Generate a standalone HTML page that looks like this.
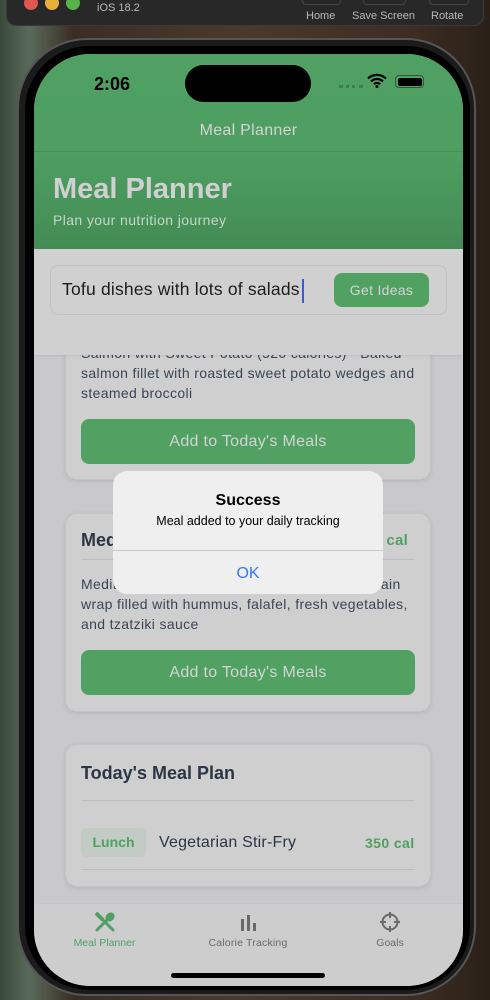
<!DOCTYPE html>
<html><head><meta charset="utf-8"><style>
*{margin:0;padding:0;box-sizing:border-box}
body{width:490px;height:1000px;overflow:hidden;position:relative;font-family:"Liberation Sans",sans-serif;background:linear-gradient(90deg,#3a4a3a 0%,#5a6a5a 6%,#3a2e24 15%,#4a3a2c 50%,#3c2c22 85%,#2a2018 100%)}
.abs{position:absolute}
.mac{left:6px;top:-10px;width:478px;height:36px;background:#282828;border-radius:10px;border:1px solid #3a3a3a}
.dot{width:14px;height:14px;border-radius:50%;top:-4px}
.mt{color:#b8b8b8;font-size:11px}
.frame{left:17px;top:38px;width:459px;height:958px;border-radius:70px;background:#1b1b1b;border:2px solid #555}
.bez{left:25px;top:46px;width:445px;height:944px;border-radius:64px;background:#000}
.screen{left:34px;top:54px;width:429px;height:932px;border-radius:56px;overflow:hidden;background:#c9c9cb}
.hdr{left:0;top:0;width:429px;height:195px;background:linear-gradient(#4fa062 0%,#4e9f61 50%,#438c55 100%)}
.card{background:#cfcfd0;border-radius:12px;box-shadow:0 1px 4px rgba(0,0,0,.12);border:1px solid #c4c4c6}
.btn{background:#51a163;border-radius:8px;color:#d3d3d3;font-size:16px;text-align:center;letter-spacing:.3px}
.txt{color:#3a4556;font-size:14px;line-height:20px;letter-spacing:.35px}
</style></head><body>
<div class="abs mac"></div>
<div class="abs dot" style="left:24px;background:#e0574f"></div>
<div class="abs dot" style="left:45px;background:#e7b03b"></div>
<div class="abs dot" style="left:66px;background:#56b347"></div>
<div class="abs mt" style="left:97px;top:2px">iOS 18.2</div>
<div class="abs mt" style="left:306px;top:10px">Home</div>
<div class="abs mt" style="left:352px;top:10px">Save Screen</div>
<div class="abs mt" style="left:431px;top:10px">Rotate</div>
<div class="abs" style="left:302px;top:-6px;width:39px;height:11px;border:1px solid #444;border-radius:4px"></div>
<div class="abs" style="left:363px;top:-6px;width:43px;height:11px;border:1px solid #444;border-radius:4px"></div>
<div class="abs" style="left:429px;top:-6px;width:40px;height:11px;border:1px solid #444;border-radius:4px"></div>
<div class="abs frame"></div>
<div class="abs bez"></div>
<div class="abs screen">
 <div class="abs hdr"></div>
 <div class="abs" style="left:60px;top:20px;font-size:18px;font-weight:bold;color:#000">2:06</div>
 <div class="abs" style="left:151px;top:11px;width:126px;height:37px;border-radius:19px;background:#000"></div>
 <div class="abs" style="left:305px;top:31px;width:24px;height:3px;border-top:3px dotted #3f7d4e"></div>
 <svg class="abs" style="left:333px;top:19px" width="20" height="15" viewBox="0 0 20 15"><path d="M1 5.5a13 13 0 0 1 18 0M4 8.5a8.5 8.5 0 0 1 12 0M7 11.3a4 4 0 0 1 6 0" stroke="#000" stroke-width="2.2" fill="none"/><circle cx="10" cy="13.5" r="1.5"/></svg>
 <div class="abs" style="left:361px;top:21px;width:29px;height:13px;border:1px solid #2d5a37;border-radius:4px;padding:1.5px"><div style="width:100%;height:100%;background:#000;border-radius:2px"></div></div>
 <div class="abs" style="left:0;top:68px;width:429px;text-align:center;color:#d4d4d4;font-size:16px;letter-spacing:.3px">Meal Planner</div>
 <div class="abs" style="left:0;top:97px;width:429px;height:1px;background:#46915a"></div>
 <div class="abs" style="left:19px;top:119px;color:#d0d0d0;font-size:29px;font-weight:bold">Meal Planner</div>
 <div class="abs" style="left:19px;top:158px;color:#c8d4ca;font-size:14px;letter-spacing:.4px">Plan your nutrition journey</div>
 <!-- card1 -->
 <div class="abs card" style="left:31px;top:260px;width:366px;height:166px"></div>
 <div class="abs txt" style="left:47px;top:289px;width:345px">Salmon with Sweet Potato (520 calories) - Baked salmon fillet with roasted sweet potato wedges and steamed broccoli</div>
 <div class="abs" style="left:0;top:195px;width:429px;height:106px;background:#d0d0d1;box-shadow:0 1px 2px rgba(0,0,0,.08)"></div>
 <div class="abs" style="left:16px;top:211px;width:397px;height:50px;border:1px solid #c2c2c4;border-radius:8px"></div>
 <div class="abs" style="left:28px;top:225px;font-size:17.5px;color:#1c1c1c;letter-spacing:.2px">Tofu dishes with lots of salads</div>
 <div class="abs" style="left:268px;top:225px;width:2px;height:24px;background:#3b5bd6"></div>
 <div class="abs btn" style="left:300px;top:219px;width:95px;height:34px;line-height:34px;font-size:14px">Get Ideas</div>
 <div class="abs btn" style="left:47px;top:365px;width:334px;height:45px;line-height:45px">Add to Today's Meals</div>
 <!-- card2 -->
 <div class="abs card" style="left:31px;top:459px;width:366px;height:199px"></div>
 <div class="abs" style="left:47px;top:476px;font-size:18px;font-weight:bold;color:#2b3546">Mediterranean Wrap</div>
 <div class="abs" style="left:322px;top:478px;font-size:15px;font-weight:bold;color:#4fa062;letter-spacing:.3px">450 cal</div>
 <div class="abs" style="left:47px;top:505px;width:334px;height:1px;background:#bdbdbf"></div>
 <div class="abs txt" style="left:47px;top:520px;width:345px">Mediterranean Wrap (450 calories) - Whole grain wrap filled with hummus, falafel, fresh vegetables, and tzatziki sauce</div>
 <div class="abs btn" style="left:47px;top:596px;width:334px;height:45px;line-height:45px">Add to Today's Meals</div>
 <!-- card3 -->
 <div class="abs card" style="left:31px;top:690px;width:366px;height:143px"></div>
 <div class="abs" style="left:47px;top:709px;font-size:18px;font-weight:bold;color:#2b3546">Today's Meal Plan</div>
 <div class="abs" style="left:47px;top:746px;width:334px;height:1px;background:#bdbdbf"></div>
 <div class="abs" style="left:47px;top:774px;width:65px;height:29px;background:#c2ccc5;border-radius:5px;color:#4fa062;font-size:14px;font-weight:bold;text-align:center;line-height:29px">Lunch</div>
 <div class="abs" style="left:125px;top:780px;font-size:16px;color:#2b3546;letter-spacing:.2px">Vegetarian Stir-Fry</div>
 <div class="abs" style="left:331px;top:781px;font-size:14px;font-weight:bold;color:#4fa062;letter-spacing:.4px">350 cal</div>
 <div class="abs" style="left:47px;top:815px;width:334px;height:1px;background:#bdbdbf"></div>
 <!-- tabbar -->
 <div class="abs" style="left:0;top:849px;width:429px;height:90px;background:#cdcdce;border-top:1px solid #c4c4c6"></div>
 <svg class="abs" style="left:60px;top:857px" width="22" height="22" viewBox="0 0 22 22"><path d="M3 3l16 16M3 19L14 8" stroke="#4fa062" stroke-width="3" stroke-linecap="round"/><ellipse cx="16" cy="6" rx="4" ry="5" transform="rotate(45 16 6)" fill="#4fa062"/><path d="M2 2l7 7" stroke="#4fa062" stroke-width="4"/></svg>
 <div class="abs" style="left:0;top:883px;width:141px;text-align:center;font-size:10.5px;color:#4fa062">Meal Planner</div>
 <svg class="abs" style="left:205px;top:861px" width="18" height="16"><rect x="2" y="4" width="3" height="12" fill="#6a6a6a"/><rect x="8" y="0" width="3" height="16" fill="#6a6a6a"/><rect x="14" y="8" width="3" height="8" fill="#6a6a6a"/></svg>
 <div class="abs" style="left:140px;top:883px;width:148px;text-align:center;font-size:10.5px;color:#6a6a6a;letter-spacing:.2px">Calorie Tracking</div>
 <svg class="abs" style="left:345px;top:857px" width="22" height="22" viewBox="0 0 22 22"><circle cx="11" cy="11" r="7.5" stroke="#6a6a6a" stroke-width="2" fill="none"/><path d="M11 1v6M11 15v6M1 11h6M15 11h6" stroke="#6a6a6a" stroke-width="2"/></svg>
 <div class="abs" style="left:312px;top:883px;width:88px;text-align:center;font-size:10.5px;color:#6a6a6a">Goals</div>
 <div class="abs" style="left:137px;top:919px;width:154px;height:5px;border-radius:3px;background:#000"></div>
 <!-- alert -->
 <div class="abs" style="left:79px;top:417px;width:270px;height:123px;background:#efefef;border-radius:14px"></div>
 <div class="abs" style="left:79px;top:438px;width:270px;text-align:center;font-size:16px;font-weight:bold;color:#000">Success</div>
 <div class="abs" style="left:79px;top:460px;width:270px;text-align:center;font-size:12.5px;color:#000">Meal added to your daily tracking</div>
 <div class="abs" style="left:79px;top:496px;width:270px;height:1px;background:#c9c9cb"></div>
 <div class="abs" style="left:79px;top:511px;width:270px;text-align:center;font-size:16px;color:#2f7cf6">OK</div>
</div>
</body></html>
